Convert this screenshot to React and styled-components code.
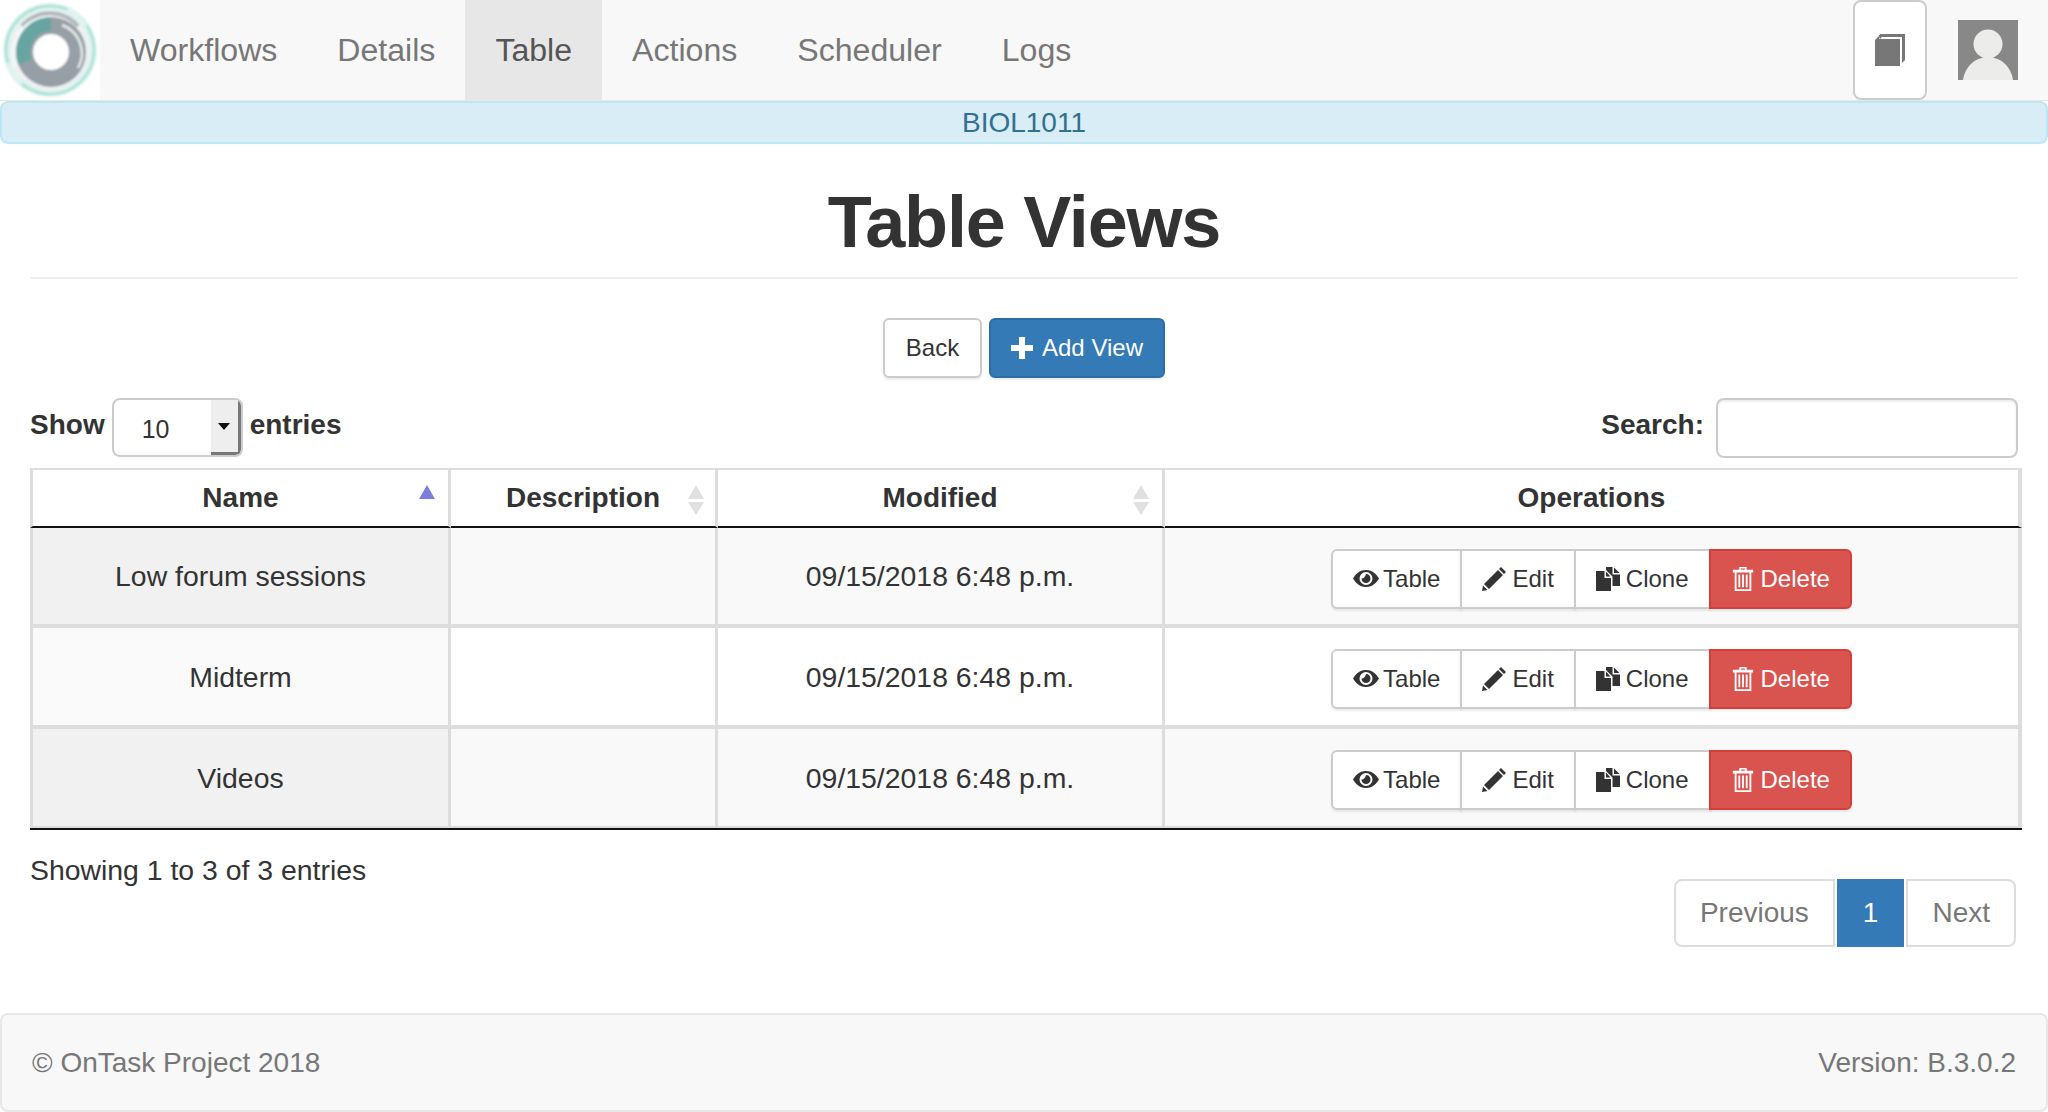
import React from 'react';
import styled, { createGlobalStyle } from 'styled-components';

const GlobalStyle = createGlobalStyle`
  html, body {
    margin: 0;
    padding: 0;
    background: #fff;
  }
  body {
    font-family: "Liberation Sans", Arial, sans-serif;
    font-size: 28px;
    line-height: 40px;
    color: #333;
  }
  * {
    box-sizing: border-box;
  }
`;

const Page = styled.div`
  min-height: 1112px;
  display: flex;
  flex-direction: column;
`;

const Navbar = styled.nav`
  height: 101px;
  flex: none;
  display: flex;
  align-items: stretch;
  background: #f8f8f8;
  border-bottom: 1px solid #e7e7e7;
`;

const LogoBox = styled.div`
  width: 100px;
  height: 100px;
  background: #fff;
  flex: none;
`;

const NavItem = styled.a`
  display: flex;
  align-items: center;
  height: 100px;
  padding: 0 30px;
  font-size: 32.1px;
  color: ${({ $active }) => ($active ? '#555' : '#777')};
  background: ${({ $active }) => ($active ? '#e7e7e7' : 'transparent')};
`;

const NavRight = styled.div`
  margin-left: auto;
  display: flex;
  align-items: flex-start;
  gap: 31px;
  padding-right: 30px;
`;

const BookButton = styled.button`
  width: 74px;
  height: 100px;
  background: #fff;
  border: 2px solid #ccc;
  border-radius: 8px;
  padding: 0;
  display: flex;
  align-items: center;
  justify-content: center;
`;

const Avatar = styled.div`
  width: 60px;
  height: 60px;
  margin-top: 20px;
`;

const Notice = styled.div`
  height: 43px;
  flex: none;
  background: #d9edf7;
  border: 2px solid #bce8f1;
  border-radius: 8px;
  color: #31708f;
  display: flex;
  align-items: center;
  justify-content: center;
`;

const Content = styled.main`
  padding: 0 30px;
`;

const Title = styled.h1`
  margin: 0;
  height: 135px;
  padding-top: 38px;
  font-size: 72px;
  line-height: 80px;
  font-weight: 700;
  letter-spacing: -1.2px;
  text-align: center;
  color: #333;
  border-bottom: 2px solid #eee;
`;

const Toolbar = styled.div`
  display: flex;
  justify-content: center;
  gap: 7px;
  margin-top: 39px;
`;

const Button = styled.button`
  font: inherit;
  font-size: 24px;
  line-height: 36px;
  height: 60px;
  padding: 10px 20px;
  border: 2px solid ${({ $variant }) => ($variant === 'primary' ? '#2e6da4' : '#ccc')};
  border-radius: 6px;
  color: ${({ $variant }) => ($variant === 'primary' ? '#fff' : '#333')};
  background: ${({ $variant }) => ($variant === 'primary' ? '#337ab7' : '#fff')};
  box-shadow: 0 2px 2px rgba(0, 0, 0, 0.08);
  display: inline-flex;
  align-items: center;
  justify-content: center;
  gap: 9px;
  white-space: nowrap;
`;

const BackButton = styled(Button)`
  min-width: 99px;
`;

const Controls = styled.div`
  display: flex;
  justify-content: space-between;
  align-items: flex-start;
  margin-top: 20px;
  height: 60px;
`;

const ControlLabel = styled.label`
  display: flex;
  align-items: flex-start;
  gap: ${({ $gap }) => $gap}px;
  font-weight: 700;
`;

const ControlText = styled.span`
  margin-top: 7px;
`;

const SelectWrap = styled.span`
  position: relative;
  display: block;
  width: 131px;
  height: 59px;
  border: 2px solid #ccc;
  border-radius: 8px;
  background: #fff;
  overflow: hidden;
`;

const Select = styled.select`
  appearance: none;
  display: block;
  width: 100%;
  height: 100%;
  border: 0;
  background: transparent;
  font: inherit;
  font-size: 25px;
  font-weight: 400;
  color: #333;
  padding: 2px 0 0 28px;
`;

const SelectArrow = styled.span`
  position: absolute;
  top: 0;
  right: 0;
  bottom: 0;
  width: 30px;
  background: #eee;
  border-right: 3px solid #777;
  border-bottom: 3px solid #777;
  display: flex;
  align-items: center;
  justify-content: center;
  pointer-events: none;

  &::after {
    content: '';
    width: 0;
    height: 0;
    border-left: 6px solid transparent;
    border-right: 6px solid transparent;
    border-top: 7px solid #111;
  }
`;

const SearchInput = styled.input`
  width: 302px;
  height: 60px;
  border: 2px solid #ccc;
  border-radius: 8px;
  background: #fff;
  box-shadow: inset 0 2px 2px rgba(0, 0, 0, 0.075);
`;

const TableFrame = styled.table`
  width: 1992px;
  margin-top: 10px;
  border-collapse: separate;
  border-spacing: 0;
  table-layout: fixed;
  border-top: 2px solid #ddd;
  border-bottom: 2px solid #111;
`;

const HeadCell = styled.th`
  position: relative;
  height: 58px;
  padding: 0 20px;
  font-size: 28px;
  font-weight: 700;
  text-align: center;
  border-right: 3px solid #ddd;
  border-bottom: 2px solid #111;
  background: #fff;

  &:first-child {
    border-left: 3px solid #ddd;
  }
  &:last-child {
    border-right: 4px solid #ddd;
  }
`;

const SortMark = styled.svg`
  position: absolute;
  top: 15px;
  right: ${({ $right }) => $right}px;
  width: 18px;
  height: 30px;
`;

const Cell = styled.td`
  height: ${({ $first }) => ($first ? 98 : 101)}px;
  padding: 0 20px;
  text-align: center;
  font-size: 28.4px;
  background: ${({ $sorted, $odd }) =>
    $sorted ? ($odd ? '#f1f1f1' : '#fafafa') : $odd ? '#f9f9f9' : '#fff'};
  border-right: 3px solid #ddd;
  border-bottom: 2px solid #ddd;
  border-top: ${({ $first }) => ($first ? '0' : '2px solid #ddd')};

  &:first-child {
    border-left: 3px solid #ddd;
  }
  &:last-child {
    border-right: 4px solid #ddd;
  }
`;

const OpGroup = styled.div`
  display: flex;
  justify-content: center;
  margin-top: 5px;
`;

const OpButton = styled(Button)`
  border-radius: 0;
  margin-left: -2px;
  gap: 6px;
  border-color: ${({ $danger }) => ($danger ? '#d43f3a' : '#ccc')};
  background: ${({ $danger }) => ($danger ? '#d9534f' : '#fff')};
  color: ${({ $danger }) => ($danger ? '#fff' : '#333')};

  &:first-child {
    margin-left: 0;
    border-radius: 6px 0 0 6px;
  }
  &:last-child {
    border-radius: 0 6px 6px 0;
  }
`;

const TableFooter = styled.div`
  display: flex;
  justify-content: space-between;
  align-items: flex-start;
  padding-right: 2px;
`;

const Info = styled.div`
  margin-top: 20px;
  font-size: 28.4px;
`;

const Pager = styled.ul`
  list-style: none;
  display: flex;
  gap: 2px;
  margin: 49px 0 0;
  padding: 0;
`;

const PageItem = styled.li`
  height: 68px;
  padding: 12px 24px;
  color: ${({ $current }) => ($current ? '#fff' : '#777')};
  background: ${({ $current }) => ($current ? '#337ab7' : '#fff')};
  border: 2px solid ${({ $current }) => ($current ? '#337ab7' : '#ddd')};

  &:first-child {
    border-radius: 8px 0 0 8px;
  }
  &:last-child {
    border-radius: 0 8px 8px 0;
  }
`;

const Footer = styled.footer`
  margin-top: auto;
  height: 99px;
  flex: none;
  display: flex;
  justify-content: space-between;
  align-items: center;
  padding: 0 30px;
  background: #f8f8f8;
  border: 2px solid #e7e7e7;
  border-radius: 8px;
  color: #777;
`;

const IconSvg = styled.svg`
  width: ${({ $size }) => $size || 24}px;
  height: ${({ $size }) => $size || 24}px;
  margin-right: ${({ $size }) => ($size > 24 ? 24 - $size : 0)}px;
  fill: currentColor;
  flex: none;
`;

const Logo = () => (
  <svg width="100" height="100" viewBox="0 0 100 100">
    <defs>
      <filter id="soft" x="-20%" y="-20%" width="140%" height="140%">
        <feGaussianBlur stdDeviation="1.2" />
      </filter>
    </defs>
    <g filter="url(#soft)">
      <circle cx="50" cy="50" r="47" fill="#dff3ef" />
      <circle cx="50" cy="50" r="44" fill="none" stroke="#8ed8ca" strokeWidth="2.5" strokeDasharray="100 25" opacity="0.7" />
      <circle cx="50" cy="50" r="40" fill="#eef2f2" />
      <path d="M22 26 A37 37 0 0 1 78 26" fill="none" stroke="#b0b7ba" strokeWidth="4" />
      <circle cx="51" cy="52" r="35" fill="#969fa5" />
      <path d="M15 68 A38 38 0 0 1 51 17" fill="none" stroke="#f4f8f8" strokeWidth="3" />
      <path d="M25 62 A28 28 0 0 1 51 24" fill="none" stroke="#66a5a1" strokeWidth="14" />
      <path d="M62 25 A30 30 0 0 1 78 68" fill="none" stroke="#e4ecec" strokeWidth="2.5" />
      <circle cx="51" cy="52" r="18" fill="#fff" />
    </g>
  </svg>
);

const AvatarPic = () => (
  <svg width="60" height="60" viewBox="0 0 60 60">
    <rect width="60" height="60" fill="#888" />
    <circle cx="30" cy="24" r="14.5" fill="#ececea" />
    <path d="M5 60 C7 46 18 37 30 37 C42 37 53 46 55 60 Z" fill="#ececea" />
  </svg>
);

const BookIcon = () => (
  <svg width="30" height="32" viewBox="0 0 30 32" fill="#777">
    <path d="M5 0 H30 V26 L27 29 V3 H7 L5 5 Z" />
    <path d="M0 6 L4 2 V1 H6 L4 5 H25 V32 H0 Z" />
  </svg>
);

const PlusIcon = () => (
  <IconSvg $size={22} viewBox="0 0 22 22">
    <path d="M8 0 H14 V8 H22 V14 H14 V22 H8 V14 H0 V8 H8 Z" />
  </IconSvg>
);

const EyeIcon = () => (
  <IconSvg $size={26} viewBox="0 0 26 26">
    <path
      fillRule="evenodd"
      d="M13 4 C20 4 24 9 26 12.500 C24 16 20 21 13 21 C6 21 2 16 0 12.500 C2 9 6 4 13 4 Z M13 6 A6.500 6.500 0 1 0 13 19 A6.500 6.500 0 1 0 13 6 Z M13 8 A4.500 4.500 0 1 1 8.500 12.500 C10 13 12.500 11 13 8 Z"
    />
  </IconSvg>
);

const PencilIcon = () => (
  <IconSvg viewBox="0 0 24 24">
    <path d="M19 0 L24 5 L22 7 L17 2 Z M16 3 L21 8 L7 22 L2 17 Z M1 18.500 L5.500 23 L0 24 Z" />
  </IconSvg>
);

const CloneIcon = () => (
  <IconSvg viewBox="0 0 24 24">
    <path d="M0 4 H8.500 V11 H15 V24 H0 Z" />
    <path d="M10 4.500 L14.500 9.500 H10 Z" />
    <path d="M10 0 H16.500 V7.500 H24 V19 H16.500 V9.500 L10 3 Z" />
    <path d="M18 0.500 L23.500 6 H18 Z" />
  </IconSvg>
);

const TrashIcon = () => (
  <IconSvg viewBox="0 0 24 26">
    <path
      fillRule="evenodd"
      d="M8 0 H16 V3 H23 V6 H21 V26 H3 V6 H1 V3 H8 Z M10 1.500 V3 H14 V1.500 Z M5 6 V24 H19 V6 Z M7 8 H9 V22 H7 Z M11 8 H13 V22 H11 Z M15 8 H17 V22 H15 Z"
    />
  </IconSvg>
);

const SortIcon = ({ dir, right }) => (
  <SortMark $right={right} viewBox="0 0 18 30">
    <path d="M9 0 L17 14 H1 Z" fill={dir === 'asc' ? '#7b7fdc' : '#e0e0e0'} />
    {dir !== 'asc' && <path d="M1 17 H17 L9 30 Z" fill="#e0e0e0" />}
  </SortMark>
);

const NAV = ['Workflows', 'Details', 'Table', 'Actions', 'Scheduler', 'Logs'];

const ROWS = [
  { name: 'Low forum sessions', modified: '09/15/2018 6:48 p.m.' },
  { name: 'Midterm', modified: '09/15/2018 6:48 p.m.' },
  { name: 'Videos', modified: '09/15/2018 6:48 p.m.' },
];

export default function App() {
  return (
    <Page>
      <GlobalStyle />
      <Navbar>
        <LogoBox>
          <Logo />
        </LogoBox>
        {NAV.map((item) => (
          <NavItem key={item} $active={item === 'Table'}>
            {item}
          </NavItem>
        ))}
        <NavRight>
          <BookButton>
            <BookIcon />
          </BookButton>
          <Avatar>
            <AvatarPic />
          </Avatar>
        </NavRight>
      </Navbar>
      <Notice>BIOL1011</Notice>
      <Content>
        <Title>Table Views</Title>
        <Toolbar>
          <BackButton>Back</BackButton>
          <Button $variant="primary">
            <PlusIcon />
            Add View
          </Button>
        </Toolbar>
        <Controls>
          <ControlLabel $gap={7}>
            <ControlText>Show</ControlText>
            <SelectWrap>
              <Select defaultValue="10">
                <option>10</option>
                <option>25</option>
                <option>50</option>
              </Select>
              <SelectArrow />
            </SelectWrap>
            <ControlText>entries</ControlText>
          </ControlLabel>
          <ControlLabel $gap={12}>
            <ControlText>Search:</ControlText>
            <SearchInput />
          </ControlLabel>
        </Controls>
        <TableFrame>
          <colgroup>
            <col style={{ width: 421 }} />
            <col style={{ width: 267 }} />
            <col style={{ width: 447 }} />
            <col />
          </colgroup>
          <thead>
            <tr>
              <HeadCell>
                Name
                <SortIcon dir="asc" right={12} />
              </HeadCell>
              <HeadCell>
                Description
                <SortIcon right={10} />
              </HeadCell>
              <HeadCell>
                Modified
                <SortIcon right={12} />
              </HeadCell>
              <HeadCell>Operations</HeadCell>
            </tr>
          </thead>
          <tbody>
            {ROWS.map((row, i) => (
              <tr key={row.name}>
                <Cell $sorted $odd={i % 2 === 0} $first={i === 0}>
                  {row.name}
                </Cell>
                <Cell $odd={i % 2 === 0} $first={i === 0} />
                <Cell $odd={i % 2 === 0} $first={i === 0}>
                  {row.modified}
                </Cell>
                <Cell $odd={i % 2 === 0} $first={i === 0}>
                  <OpGroup>
                    <OpButton>
                      <EyeIcon />
                      Table
                    </OpButton>
                    <OpButton>
                      <PencilIcon />
                      Edit
                    </OpButton>
                    <OpButton>
                      <CloneIcon />
                      Clone
                    </OpButton>
                    <OpButton $danger>
                      <TrashIcon />
                      Delete
                    </OpButton>
                  </OpGroup>
                </Cell>
              </tr>
            ))}
          </tbody>
        </TableFrame>
        <TableFooter>
          <Info>Showing 1 to 3 of 3 entries</Info>
          <Pager>
            <PageItem>Previous</PageItem>
            <PageItem $current>1</PageItem>
            <PageItem>Next</PageItem>
          </Pager>
        </TableFooter>
      </Content>
      <Footer>
        <span>© OnTask Project 2018</span>
        <span>Version: B.3.0.2</span>
      </Footer>
    </Page>
  );
}
